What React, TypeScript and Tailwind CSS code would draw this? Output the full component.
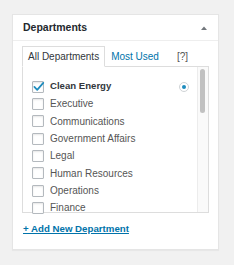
const departments = [
  'Clean Energy',
  'Executive',
  'Communications',
  'Government Affairs',
  'Legal',
  'Human Resources',
  'Operations',
  'Finance',
];

function CheckBox({ checked }: { checked?: boolean }) {
  return (
    <span className="relative flex h-[12px] w-[12px] shrink-0 items-center justify-center rounded-[1px] border border-[#b4b9be] bg-white shadow-[inset_0_1px_2px_rgba(0,0,0,0.1)]">
      {checked && (
        <svg viewBox="0 0 12 12" className="absolute -left-[1px] -top-[2px] h-[13px] w-[13px]" aria-hidden="true">
          <path d="M2.2 6.4l2.6 2.7L10.4 2.6" fill="none" stroke="#1e8cbe" strokeWidth="1.6" strokeLinecap="round" strokeLinejoin="round" />
        </svg>
      )}
    </span>
  );
}

export default function App() {
  return (
    <div className="h-[265px] w-[234px] bg-[#f1f1f1] pt-[14px] pl-[12px] font-['Liberation_Sans',Arial,sans-serif]">
      <div className="h-[236px] w-[207px] border border-[#e5e5e5] bg-white shadow-[0_1px_1px_rgba(0,0,0,0.04)]">
        <div className="flex h-[26px] items-center justify-between border-b border-[#eeeeee] pl-[10px] pr-[11px]">
          <h2 className="text-[10.5px] font-bold text-[#23282d]">Departments</h2>
          <svg viewBox="0 0 6 4" className="h-[4px] w-[6px]" aria-hidden="true">
            <path d="M0 4L3 0.5L6 4Z" fill="#72777c" />
          </svg>
        </div>

        <div className="px-[9px] pt-[5px]">
          <div className="flex items-end text-[10px]">
            <div className="relative z-10 -mb-px flex h-[21px] items-center border border-b-white border-[#dddddd] bg-white px-[5px] text-[#32373c]">
              All Departments
            </div>
            <a href="#" className="ml-[6px] flex h-[20px] items-center text-[#0073aa]">
              Most Used
            </a>
            <a href="#" className="ml-[18px] flex h-[20px] items-center text-[#555555]">
              [?]
            </a>
          </div>

          <div className="relative flex h-[147px] w-[187px] border border-[#dddddd] bg-white">
            <ul className="flex-1 pt-[11px] pl-[9px]">
              {departments.map((name, i) => (
                <li key={name} className="flex h-[17.33px] items-center">
                  <CheckBox checked={i === 0} />
                  <span
                    className={
                      i === 0
                        ? 'ml-[6px] text-[9.6px] font-bold text-[#32373c]'
                        : 'ml-[6px] text-[10px] text-[#555555]'
                    }
                  >
                    {name}
                  </span>
                  {i === 0 && (
                    <span className="ml-auto mr-[8px] flex h-[10px] w-[10px] items-center justify-center rounded-full border border-[#cfd3d6] bg-white">
                      <span className="h-[4px] w-[4px] rounded-full bg-[#1e8cbe]" />
                    </span>
                  )}
                </li>
              ))}
            </ul>
            <div className="w-[11px] border-l border-[#ececec] bg-[#fafafa] px-[2px] pt-[2px]">
              <div className="h-[44px] w-[5px] rounded-full bg-[#c1c1c1]" />
            </div>
          </div>

          <a
            href="#"
            className="mt-[9px] inline-block pl-[1px] text-[9.7px] font-bold text-[#0073aa] underline underline-offset-[1px]"
          >
            + Add New Department
          </a>
        </div>
      </div>
    </div>
  );
}
